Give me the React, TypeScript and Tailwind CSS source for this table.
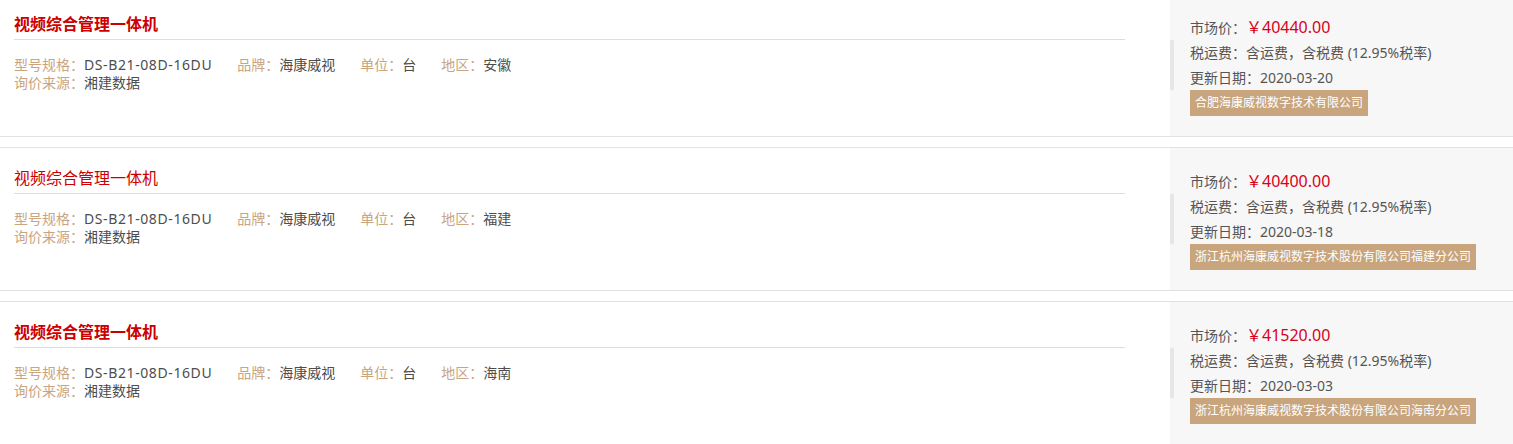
import React from 'react';

type Quote = {
  title: string;
  model: string;
  brand: string;
  unit: string;
  region: string;
  source: string;
  price: string;
  freight: string;
  updated: string;
  supplier: string;
  heavy?: boolean;
};

const QUOTES: Quote[] = [
  {
    title: '视频综合管理一体机',
    model: 'DS-B21-08D-16DU',
    brand: '海康威视',
    unit: '台',
    region: '安徽',
    source: '湘建数据',
    price: '￥40440.00',
    freight: '含运费，含税费 (12.95%税率)',
    updated: '2020-03-20',
    supplier: '合肥海康威视数字技术有限公司',
    heavy: true,
  },
  {
    title: '视频综合管理一体机',
    model: 'DS-B21-08D-16DU',
    brand: '海康威视',
    unit: '台',
    region: '福建',
    source: '湘建数据',
    price: '￥40400.00',
    freight: '含运费，含税费 (12.95%税率)',
    updated: '2020-03-18',
    supplier: '浙江杭州海康威视数字技术股份有限公司福建分公司',
  },
  {
    title: '视频综合管理一体机',
    model: 'DS-B21-08D-16DU',
    brand: '海康威视',
    unit: '台',
    region: '海南',
    source: '湘建数据',
    price: '￥41520.00',
    freight: '含运费，含税费 (12.95%税率)',
    updated: '2020-03-03',
    supplier: '浙江杭州海康威视数字技术股份有限公司海南分公司',
    heavy: true,
  },
];

function Field({ label, value, wide }: { label: string; value: string; wide?: boolean }) {
  return (
    <span className="mr-[25px]">
      <span className="text-[#c9a47f]">{label}：</span>
      <span className={`text-[#4d4d4d] ${wide ? 'tracking-[0.6px]' : ''}`}>{value}</span>
    </span>
  );
}

function QuoteRow({ q }: { q: Quote }) {
  return (
    <div className="flex h-[144px] border-y border-[#e2e2e2] mb-[10px] bg-white">
      <div className="flex-1 min-w-0 pl-[14px] pr-[45px] pt-[18px]">
        <h3
          className={`text-[16px] leading-[25px] pb-[2px] border-b border-[#dedede] text-[#cc0000] ${
            q.heavy ? 'font-bold' : 'font-normal'
          }`}
        >
          {q.title}
        </h3>
        <div className="mt-[16px] text-[14px] leading-[18px]">
          <div className="flex">
            <Field label="型号规格" value={q.model} wide />
            <Field label="品牌" value={q.brand} />
            <Field label="单位" value={q.unit} />
            <Field label="地区" value={q.region} />
          </div>
          <div className="flex">
            <Field label="询价来源" value={q.source} />
          </div>
        </div>
      </div>

      <div className="relative w-[343px] shrink-0 bg-[#f7f7f7] pl-[20px] pt-[21px] text-[14px] text-[#555555]">
        <div className="absolute left-0 top-1/2 -translate-y-1/2 h-[51px] w-[4px] rounded-full bg-[#e6e6e6]" />
        <div className="leading-[24px]">
          市场价：<span className="text-[16px] text-[#d9001b]">{q.price}</span>
        </div>
        <div className="leading-[25px]">税运费：{q.freight}</div>
        <div className="leading-[25px]">更新日期：{q.updated}</div>
        <div className="inline-block h-[26px] px-[5px] bg-[#c8a57d] text-[12px] leading-[26px] text-white">
          {q.supplier}
        </div>
      </div>
    </div>
  );
}

export default function App() {
  return (
    <div className="w-[1513px] h-[444px] overflow-hidden bg-white font-['Noto_Sans','Noto_Sans_CJK_SC',sans-serif]">
      <div className="-mt-[7px]">
        {QUOTES.map((q, i) => (
          <QuoteRow key={i} q={q} />
        ))}
      </div>
    </div>
  );
}
